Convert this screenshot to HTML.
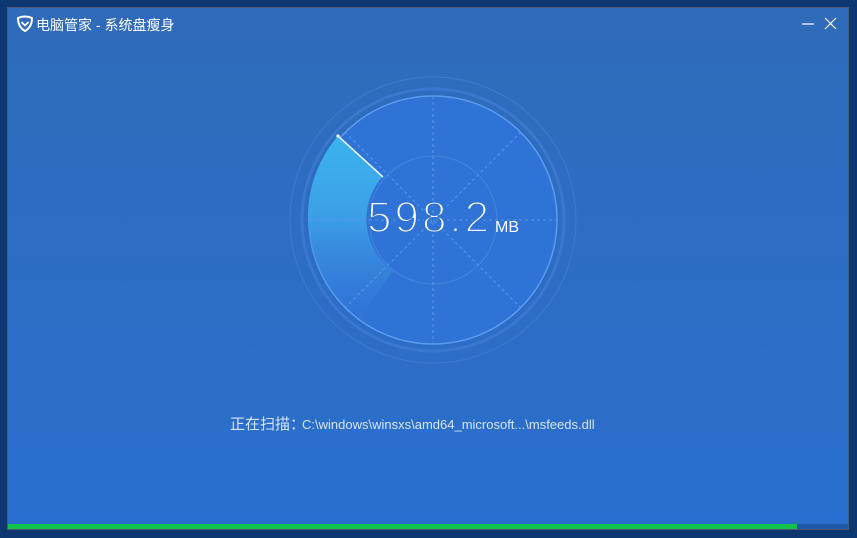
<!DOCTYPE html>
<html><head><meta charset="utf-8"><style>
html,body{margin:0;padding:0;width:857px;height:538px;overflow:hidden;background:#0d3770;}
.win{position:absolute;left:8px;top:8px;width:840px;height:521px;background:linear-gradient(#2f6bb9,#2a6fcf);box-shadow:0 0 0 1px #4a5a70;}
.title{position:absolute;left:36px;top:15px;color:#fff;font:14px "Liberation Sans","Noto Sans CJK SC",sans-serif;}
.scan{position:absolute;left:230px;top:413px;color:#d6e4f7;font:15px "Liberation Sans","Noto Sans CJK SC",sans-serif;white-space:nowrap;}
.scan span{font-size:13px;margin-left:-3px;}
.bar{position:absolute;left:8px;top:524px;width:840px;height:5px;background:#1f58a6;}
.bar div{width:789px;height:5px;background:#0fc24a;}
</style></head><body>
<div class="win"></div>
<svg style="position:absolute;left:16px;top:15px" width="18" height="18" viewBox="0 0 18 18"><path d="M2 3 Q9 0 16 3 Q16 12 9 16 Q2 12 2 3Z" fill="none" stroke="#fff" stroke-width="2"/><path d="M5.5 7 L9 10.5 L12.5 7" fill="none" stroke="#fff" stroke-width="1.8"/></svg>
<div class="title">电脑管家 - 系统盘瘦身</div>
<svg style="position:absolute;left:800px;top:15px" width="40" height="20"><line x1="2" y1="9" x2="14" y2="9" stroke="#fff" stroke-width="1.2"/><line x1="25" y1="3" x2="36" y2="14" stroke="#fff" stroke-width="1.2"/><line x1="36" y1="3" x2="25" y2="14" stroke="#fff" stroke-width="1.2"/></svg>
<svg style="position:absolute;left:0;top:0" width="857" height="538">
<defs><linearGradient id="g" x1="0" y1="0" x2="0" y2="1"><stop offset="0" stop-color="#3ab4ee"/><stop offset="0.45" stop-color="#3c9fe6"/><stop offset="1" stop-color="#3a80dc" stop-opacity="0.1"/></linearGradient></defs>
<circle cx="433" cy="220" r="143" fill="none" stroke="#3d7ad0" stroke-width="1"/>
<circle cx="433" cy="220" r="131" fill="none" stroke="#3a78cf" stroke-width="3"/>
<circle cx="433" cy="220" r="124" fill="#2f73d6" stroke="#5b9bf0" stroke-width="1.5"/>
<path d="M338 136 A124 124 0 0 0 360 318 L393 271 A64 64 0 0 1 383 176 Z" fill="url(#g)"/>
<circle cx="433" cy="220" r="64" fill="none" stroke="#4584dc" stroke-width="1"/>
<g stroke="#5d95e6" stroke-width="1" stroke-dasharray="3 3">
<line x1="433" y1="96" x2="433" y2="344"/><line x1="309" y1="220" x2="557" y2="220"/>
<line x1="345" y1="132" x2="521" y2="308"/><line x1="521" y1="132" x2="345" y2="308"/></g>
<line x1="338" y1="136" x2="383" y2="177" stroke="#e8f4ff" stroke-width="1.6"/>
<circle cx="338" cy="136" r="1.6" fill="#fff"/>
<text x="367" y="232" fill="#fff" font-family="Liberation Sans,sans-serif" font-size="44" letter-spacing="3" stroke="#2f73d6" stroke-width="2" paint-order="stroke" style="paint-order:normal">598.2</text>
<text x="495" y="232" fill="#fff" font-family="Liberation Sans,sans-serif" font-size="16">MB</text>
</svg>
<div class="scan">正在扫描：<span>C:\windows\winsxs\amd64_microsoft...\msfeeds.dll</span></div>
<div class="bar"><div></div></div>
</body></html>
